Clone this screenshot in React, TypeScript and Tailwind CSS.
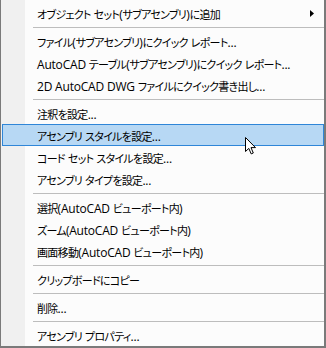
import React from 'react';

type Entry = { label: string; sub?: boolean; active?: boolean } | 'sep';

const entries: Entry[] = [
  { label: 'オブジェクト セット(サブアセンブリ)に追加', sub: true },
  'sep',
  { label: 'ファイル(サブアセンブリ)にクイック レポート...' },
  { label: 'AutoCAD テーブル(サブアセンブリ)にクイック レポート...' },
  { label: '2D AutoCAD DWG ファイルにクイック書き出し...' },
  'sep',
  { label: '注釈を設定...' },
  { label: 'アセンブリ スタイルを設定...', active: true },
  { label: 'コード セット スタイルを設定...' },
  { label: 'アセンブリ タイプを設定...' },
  'sep',
  { label: '選択(AutoCAD ビューポート内)' },
  { label: 'ズーム(AutoCAD ビューポート内)' },
  { label: '画面移動(AutoCAD ビューポート内)' },
  'sep',
  { label: 'クリップボードにコピー' },
  'sep',
  { label: '削除...' },
  'sep',
  { label: 'アセンブリ プロパティ...' },
];

// latin runs and japanese runs use different faces, like the windows menu font
const Label = ({ text }: { text: string }) => (
  <span className="flex-1 whitespace-nowrap">
    {text.split(/([\x20-\x7e]+)/).map((part, i) =>
      /^[\x20-\x7e]+$/.test(part) ? (
        <span key={i} className="font-['Open_Sans',sans-serif] text-[12px] tracking-[-0.2px]">
          {part}
        </span>
      ) : (
        <span key={i} className="font-['Noto_Sans_CJK_JP',sans-serif] text-[11px] tracking-[-0.7px] [font-feature-settings:'palt']">
          {part}
        </span>
      )
    )}
  </span>
);

// mouse pointer drawn over the hovered item
const Pointer = () => (
  <svg width="13" height="20" viewBox="0 0 13 20" className="absolute left-[243px] top-[136px]">
    <path
      d="M1.5 1.5 L1.5 15.5 L4.8 12.4 L7.2 17.9 L9.3 17 L7 11.6 L11.5 11.6 Z"
      fill="#fff"
      stroke="#000"
      strokeWidth="1"
    />
  </svg>
);

export default function App() {
  return (
    <div className="relative w-[326px] h-[348px] border-l border-r-2 border-b-2 border-[#7a7a7a] bg-[linear-gradient(to_right,#f0f0f0_24px,#fcfcfc_24px)] pt-[2px] text-black">
      {entries.map((e, i) =>
        e === 'sep' ? (
          <div key={i} className="h-[6px] pt-[3px] pl-[32px]">
            <div className="h-px bg-[#bdbdbd]" />
          </div>
        ) : (
          <div
            key={i}
            className={`ml-px h-[22px] flex items-center pl-[34px] pr-[9px] leading-none border ${
              e.active ? 'bg-[#b7d8f4] border-[#2f86d8]' : 'border-transparent'
            }`}
          >
            <Label text={e.label} />
            {e.sub && (
              <svg width="4" height="7" viewBox="0 0 4 7">
                <path d="M0 0 L4 3.5 L0 7 Z" fill="#000" />
              </svg>
            )}
          </div>
        )
      )}
      <Pointer />
    </div>
  );
}
